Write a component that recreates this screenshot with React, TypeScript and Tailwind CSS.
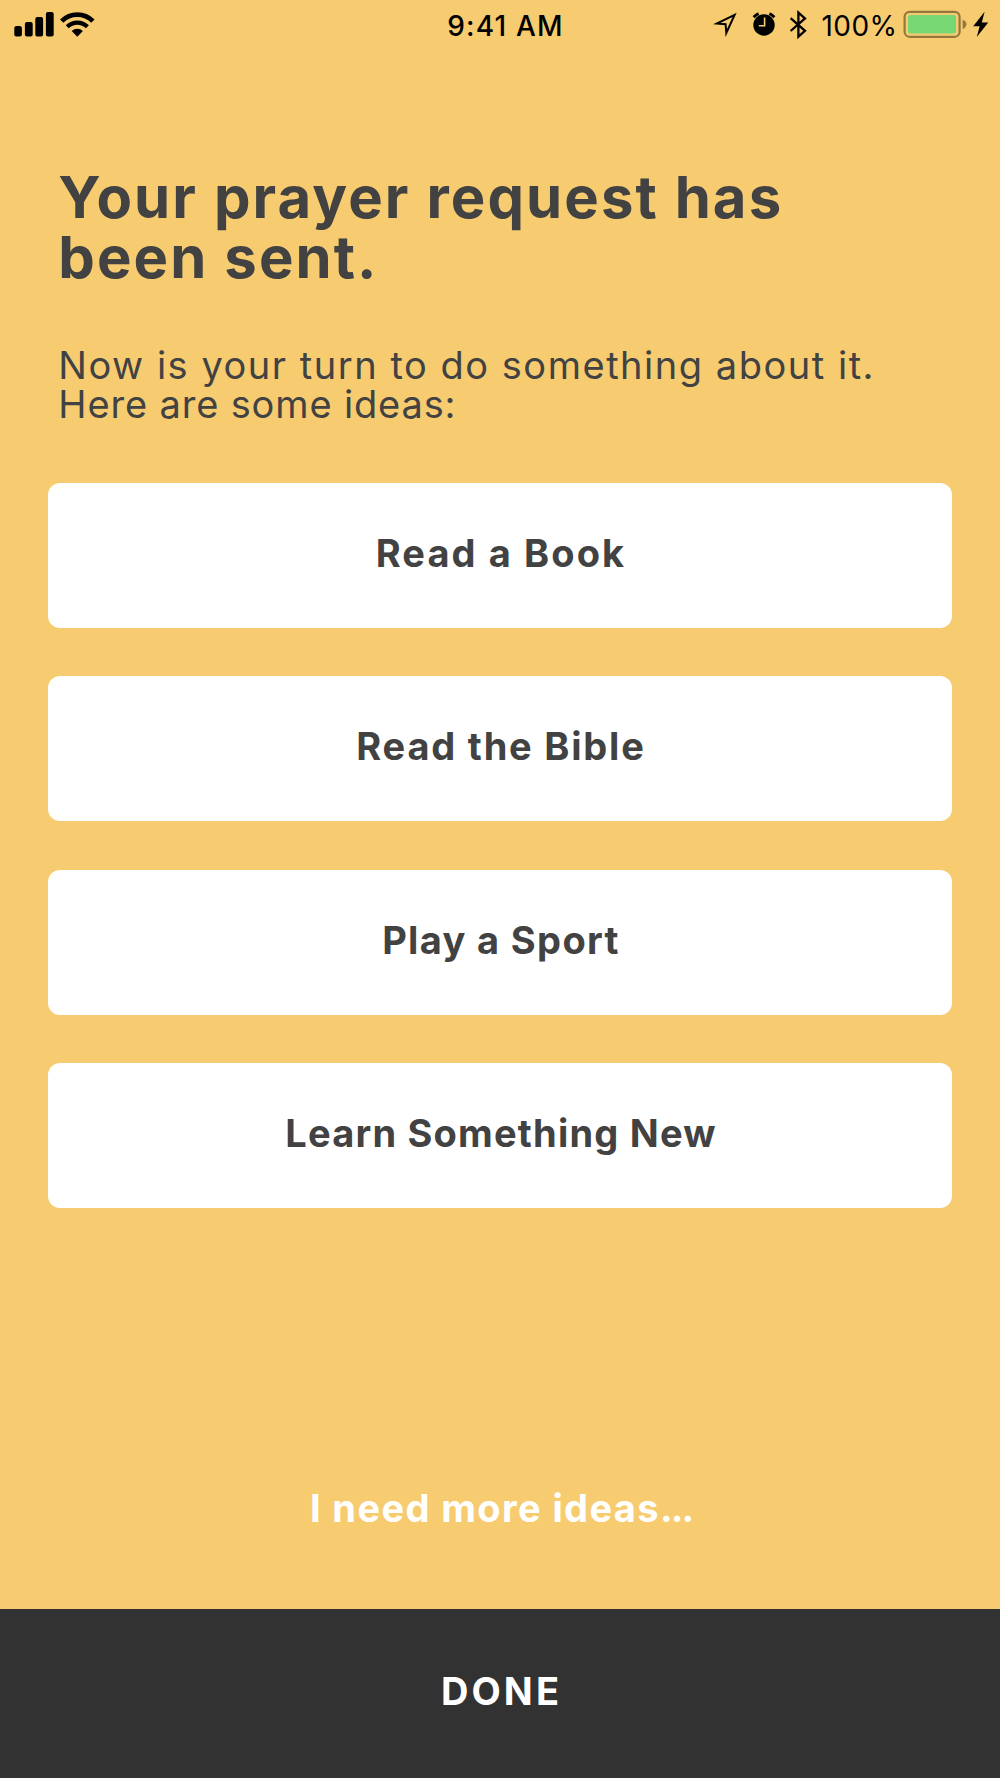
import type { ReactNode } from "react";

const ideas = [
  { label: "Read a Book", tracking: "tracking-[2.1px]" },
  { label: "Read the Bible", tracking: "tracking-[1.8px]" },
  { label: "Play a Sport", tracking: "tracking-[1.35px]" },
  { label: "Learn Something New", tracking: "tracking-[1.21px]" },
];

function Signal() {
  return (
    <svg width="40" height="50" viewBox="14 0 40 50" fill="#000">
      <rect x="14.3" y="26" width="7.6" height="10.4" rx="2" />
      <rect x="24.9" y="22" width="7.8" height="14.4" rx="2" />
      <rect x="35.3" y="17" width="7.8" height="19.4" rx="2" />
      <rect x="45.9" y="12" width="7.8" height="24.4" rx="2" />
    </svg>
  );
}

function Wifi() {
  return (
    <svg width="36" height="50" viewBox="59 0 36 50" fill="none" stroke="#000">
      <path d="M61.7 21.2A22 22 0 0 1 92.9 21.2" strokeWidth="4.7" />
      <path d="M67.2 26.7A14.4 14.4 0 0 1 87.4 26.7" strokeWidth="4.3" />
      <path d="M77.3 36.7L71.7 31.1A8 8 0 0 1 82.9 31.1Z" fill="#000" stroke="none" />
    </svg>
  );
}

function Location() {
  return (
    <svg width="24" height="50" viewBox="713 0 24 50" fill="none" stroke="#000" strokeWidth="2">
      <path d="M734.6 14.8L716.8 23.6L725.6 24.2L726.3 33Z" />
    </svg>
  );
}

function Alarm() {
  return (
    <svg width="24" height="50" viewBox="752 0 24 50">
      <circle cx="764" cy="25" r="10.7" fill="#000" />
      <path d="M753.7 17.2A14 14 0 0 1 758.6 13.7" stroke="#000" strokeWidth="3" />
      <path d="M774.3 17.2A14 14 0 0 0 769.4 13.7" stroke="#000" strokeWidth="3" />
      <path d="M764.6 17.6V25.8H758.8" fill="none" stroke="#f7cc71" strokeWidth="1.6" />
    </svg>
  );
}

function Bluetooth() {
  return (
    <svg width="18" height="50" viewBox="789 0 18 50" fill="none" stroke="#000" strokeWidth="2.3">
      <path d="M790.6 18.2L805 30.8L798.4 36.6V12.6L805 18.4L790.6 31" />
    </svg>
  );
}

function Battery() {
  return (
    <svg width="64" height="50" viewBox="903 0 64 50">
      <rect x="904.6" y="11.8" width="55" height="25" rx="5" fill="none" stroke="#94783f" strokeWidth="2.2" />
      <rect x="908" y="15" width="48" height="18.4" rx="2" fill="#77d873" />
      <path d="M962.6 19.4Q966.4 21 966.4 24.2T962.6 29Z" fill="#94783f" />
    </svg>
  );
}

function Bolt() {
  return (
    <svg width="16" height="50" viewBox="973 0 16 50" fill="#000">
      <path d="M984.6 11.8L973.2 26.2H979.6L976.8 37L988.2 22.4H981.8Z" />
    </svg>
  );
}

function StatusBar() {
  return (
    <header className="grid h-[50px] grid-cols-[1fr_auto_1fr] items-center text-[28px] text-black">
      <div className="flex gap-[5px] pl-[14px]">
        <Signal />
        <Wifi />
      </div>
      <span className="pt-px pl-[11px] font-medium tracking-[1.21px]">9:41 AM</span>
      <div className="flex items-center justify-end pr-[11px]">
        <Location />
        <span className="w-[15px]" />
        <Alarm />
        <span className="w-[13px]" />
        <Bluetooth />
        <span className="w-[96px] pt-px pl-[14.5px] whitespace-nowrap tracking-[0.43px]">100%</span>
        <Battery />
        <span className="w-[6px]" />
        <Bolt />
      </div>
    </header>
  );
}

function IdeaButton({ className, children }: { className: string; children: ReactNode }) {
  return (
    <button className={`h-[144.8px] w-full rounded-[12px] bg-white pb-[4px] pl-[2px] text-[38px] font-bold text-[#424242] ${className}`}>
      {children}
    </button>
  );
}

export default function App() {
  return (
    <div className="flex h-[1778px] w-[1000px] flex-col bg-[#f7cc71] font-['Inter',sans-serif] text-[#424242]">
      <StatusBar />

      <main className="flex flex-1 flex-col px-[48.3px] pt-[117px]">
        <h1 className="pl-[10px] text-[58px] leading-[60.3px] font-bold tracking-[2.1px]">
          Your prayer request has
          <br />
          been sent.
        </h1>
        <p className="mt-[58.8px] pl-[10px] text-[38px] leading-[38.5px] font-normal">
          <span className="tracking-[1.52px]">Now is your turn to do something about it.</span>
          <br />
          <span className="tracking-[0.85px]">Here are some ideas:</span>
        </p>

        <div className="mt-[59.8px] flex flex-col gap-[48.5px]">
          {ideas.map((idea) => (
            <IdeaButton key={idea.label} className={idea.tracking}>
              {idea.label}
            </IdeaButton>
          ))}
        </div>

        <button className="mt-auto mb-[71px] pl-[2px] text-[38px] leading-[60px] font-bold tracking-[1.4px] text-white">
          I need more ideas<span className="tracking-[-2px]">...</span>
        </button>
      </main>

      <button className="h-[169.3px] bg-[#323232] pb-[4px] pl-[3px] text-[38px] font-bold tracking-[3.1px] text-white">
        DONE
      </button>
    </div>
  );
}
